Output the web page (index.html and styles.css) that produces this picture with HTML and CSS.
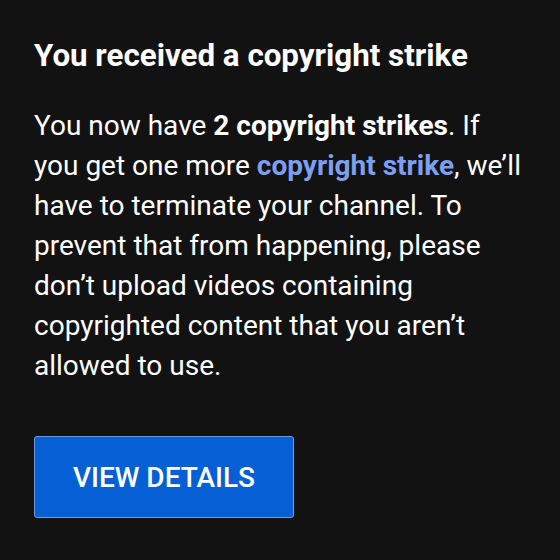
FILE: index.html
```html
<!DOCTYPE html>
<html>
<head>
<meta charset="utf-8">
<link rel="stylesheet" href="styles.css">
</head>
<body>
<div class="card">
  <h1 class="title">You received a copyright strike</h1>
  <p class="body">You now have <b>2 copyright strikes</b>. If you get one more <a class="link">copyright strike</a>, we’ll have to terminate your channel. To prevent that from happening, please don’t upload videos containing copyrighted content that you aren’t allowed to use.</p>
  <button class="btn">VIEW DETAILS</button>
</div>
</body>
</html>
```
FILE: styles.css
```css
html, body {
  margin: 0;
  padding: 0;
  background: #121212;
  width: 560px;
  height: 560px;
  overflow: hidden;
}
.card {
  padding: 36px 34px 0 34px;
  font-family: Roboto, "Liberation Sans", sans-serif;
  color: #ffffff;
}
.title {
  margin: 0;
  font-size: 31.3px;
  font-weight: 700;
  line-height: 40px;
}
.body {
  margin: 30px 0 0 0;
  font-size: 28px;
  line-height: 40px;
}
.body b { font-weight: 700; }
.link {
  color: #7e9ff0;
  font-weight: 700;
  text-decoration: none;
}
.btn {
  display: block;
  margin-top: 50px;
  width: 260px;
  height: 82px;
  background: #065fd4;
  border: 1px solid #6a9ae6;
  border-radius: 3px;
  color: #ffffff;
  font-family: Roboto, "Liberation Sans", sans-serif;
  font-size: 28px;
  font-weight: 500;
  letter-spacing: 0;
}
```
